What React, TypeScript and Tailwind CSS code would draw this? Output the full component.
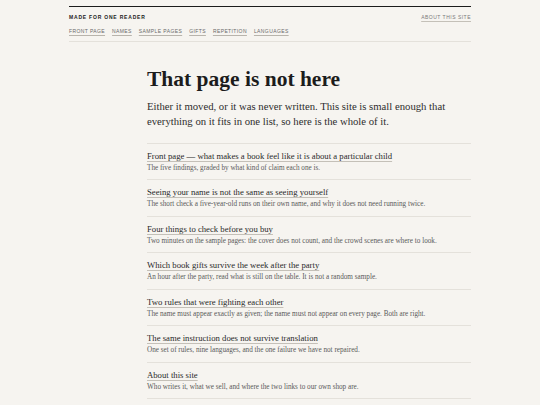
const navLinks = [
  { href: "#front", label: "Front page" },
  { href: "#names", label: "Names" },
  { href: "#samples", label: "Sample pages" },
  { href: "#gifts", label: "Gifts" },
  { href: "#repetition", label: "Repetition" },
  { href: "#languages", label: "Languages" },
];

const pages = [
  {
    title: "Front page — what makes a book feel like it is about a particular child",
    desc: "The five findings, graded by what kind of claim each one is.",
  },
  {
    title: "Seeing your name is not the same as seeing yourself",
    desc: "The short check a five-year-old runs on their own name, and why it does not need running twice.",
  },
  {
    title: "Four things to check before you buy",
    desc: "Two minutes on the sample pages: the cover does not count, and the crowd scenes are where to look.",
  },
  {
    title: "Which book gifts survive the week after the party",
    desc: "An hour after the party, read what is still on the table. It is not a random sample.",
  },
  {
    title: "Two rules that were fighting each other",
    desc: "The name must appear exactly as given; the name must not appear on every page. Both are right.",
  },
  {
    title: "The same instruction does not survive translation",
    desc: "One set of rules, nine languages, and the one failure we have not repaired.",
  },
  {
    title: "About this site",
    desc: "Who writes it, what we sell, and where the two links to our own shop are.",
  },
];

export default function App() {
  return (
    <div className="min-h-screen bg-[#f6f4f0] text-[#1c1c1c]">
      <div className="mx-auto w-[402px] pt-[6px]">
        <header className="border-t-[1.5px] border-[#1c1c1c] font-['Liberation_Sans',Arial,sans-serif]">
          <div className="flex h-[8px] items-center justify-between mt-[5.5px]">
            <span className="text-[5px] font-bold uppercase leading-[8px] tracking-[0.16em] text-[#1c1c1c]">
              Made for one reader
            </span>
            <a href="#about" className="text-[5px] uppercase leading-[8px] tracking-[0.1em] text-[#7a7a7a] underline decoration-[#c4c0b8] underline-offset-[1.5px]">
              About this site
            </a>
          </div>
          <nav className="mt-[6.5px] flex gap-[7px] border-b border-[#e4e1db] pb-[5.5px]">
            {navLinks.map((link) => (
              <a
                key={link.href}
                href={link.href}
                className="text-[5px] uppercase leading-[8px] tracking-[0.08em] text-[#6a6a6a] underline decoration-[#b8b4ac] underline-offset-[1.5px]"
              >
                {link.label}
              </a>
            ))}
          </nav>
        </header>

        <main className="pl-[78px] font-['Liberation_Serif','Times_New_Roman',serif]">
          <h1 className="mt-[24px] text-[21.5px] font-bold leading-[26px] text-[#1c1c1c]">
            That page is not here
          </h1>
          <p className="mt-[7.5px] text-[10.7px] leading-[15px] text-[#2e2e2e]">
            Either it moved, or it was never written. This site is small enough that everything on it fits in one list, so here is the whole of it.
          </p>

          <ul className="mt-[13.5px] border-t border-[#e4e1db]">
            {pages.map((p) => (
              <li key={p.title} className="border-b border-[#e4e1db] pb-[6.5px] pt-[6px]">
                <a
                  href="#"
                  className="block w-fit text-[8.7px] leading-[12px] text-[#2a2a2a] underline decoration-[#c4c0b8] underline-offset-[1.5px]"
                >
                  {p.title}
                </a>
                <p className="mt-[1px] text-[7.2px] leading-[10px] text-[#5a5a5a]">{p.desc}</p>
              </li>
            ))}
          </ul>
        </main>
      </div>
    </div>
  );
}
